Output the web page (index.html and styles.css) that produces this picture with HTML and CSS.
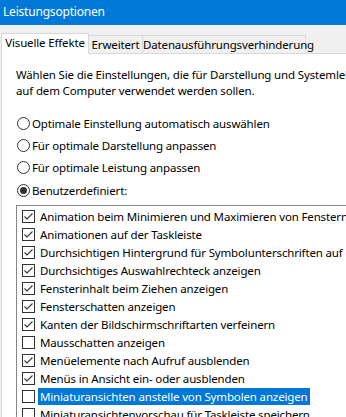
FILE: index.html
```html
<!DOCTYPE html>
<html lang="de">
<head>
<meta charset="utf-8">
<title>Leistungsoptionen</title>
<link rel="stylesheet" href="styles.css">
</head>
<body>
<div class="window">
  <div class="titlebar">Leistungsoptionen</div>
  <div class="tabs">
    <div class="tab active">Visuelle Effekte</div>
    <div class="tab t2">Erweitert</div>
    <div class="tab t3">Datenausführungsverhinderung</div>
  </div>
  <div class="panel">
    <p class="desc">Wählen Sie die Einstellungen, die für Darstellung und Systemleistung<br>auf dem Computer verwendet werden sollen.</p>
    <div class="radios">
      <div class="radio"><span class="dot"></span><span>Optimale Einstellung automatisch auswählen</span></div>
      <div class="radio"><span class="dot"></span><span>Für optimale Darstellung anpassen</span></div>
      <div class="radio"><span class="dot"></span><span>Für optimale Leistung anpassen</span></div>
      <div class="radio"><span class="dot on"></span><span>Benutzerdefiniert:</span></div>
    </div>
    <div class="list">
      <div class="item"><span class="cb on"><svg viewBox="0 0 11 11" width="11" height="11"><path d="M1.5 5.5 L4 8 L9.5 2.5" fill="none" stroke="#333" stroke-width="1.1"/></svg></span><span class="label">Animation beim Minimieren und Maximieren von Fenstern</span></div>
      <div class="item"><span class="cb on"><svg viewBox="0 0 11 11" width="11" height="11"><path d="M1.5 5.5 L4 8 L9.5 2.5" fill="none" stroke="#333" stroke-width="1.1"/></svg></span><span class="label">Animationen auf der Taskleiste</span></div>
      <div class="item"><span class="cb on"><svg viewBox="0 0 11 11" width="11" height="11"><path d="M1.5 5.5 L4 8 L9.5 2.5" fill="none" stroke="#333" stroke-width="1.1"/></svg></span><span class="label">Durchsichtigen Hintergrund für Symbolunterschriften auf dem Desktop</span></div>
      <div class="item"><span class="cb on"><svg viewBox="0 0 11 11" width="11" height="11"><path d="M1.5 5.5 L4 8 L9.5 2.5" fill="none" stroke="#333" stroke-width="1.1"/></svg></span><span class="label">Durchsichtiges Auswahlrechteck anzeigen</span></div>
      <div class="item"><span class="cb on"><svg viewBox="0 0 11 11" width="11" height="11"><path d="M1.5 5.5 L4 8 L9.5 2.5" fill="none" stroke="#333" stroke-width="1.1"/></svg></span><span class="label">Fensterinhalt beim Ziehen anzeigen</span></div>
      <div class="item"><span class="cb on"><svg viewBox="0 0 11 11" width="11" height="11"><path d="M1.5 5.5 L4 8 L9.5 2.5" fill="none" stroke="#333" stroke-width="1.1"/></svg></span><span class="label">Fensterschatten anzeigen</span></div>
      <div class="item"><span class="cb on"><svg viewBox="0 0 11 11" width="11" height="11"><path d="M1.5 5.5 L4 8 L9.5 2.5" fill="none" stroke="#333" stroke-width="1.1"/></svg></span><span class="label">Kanten der Bildschirmschriftarten verfeinern</span></div>
      <div class="item"><span class="cb"></span><span class="label">Mausschatten anzeigen</span></div>
      <div class="item"><span class="cb on"><svg viewBox="0 0 11 11" width="11" height="11"><path d="M1.5 5.5 L4 8 L9.5 2.5" fill="none" stroke="#333" stroke-width="1.1"/></svg></span><span class="label">Menüelemente nach Aufruf ausblenden</span></div>
      <div class="item"><span class="cb on"><svg viewBox="0 0 11 11" width="11" height="11"><path d="M1.5 5.5 L4 8 L9.5 2.5" fill="none" stroke="#333" stroke-width="1.1"/></svg></span><span class="label">Menüs in Ansicht ein- oder ausblenden</span></div>
      <div class="item"><span class="cb"></span><span class="label sel">Miniaturansichten anstelle von Symbolen anzeigen</span></div>
      <div class="item"><span class="cb"></span><span class="label">Miniaturansichtenvorschau für Taskleiste speichern</span></div>
      <div class="item"><span class="cb on"><svg viewBox="0 0 11 11" width="11" height="11"><path d="M1.5 5.5 L4 8 L9.5 2.5" fill="none" stroke="#333" stroke-width="1.1"/></svg></span><span class="label">Schriftglättung für Bildschirmschriftarten</span></div>
    </div>
  </div>
</div>
</body>
</html>
```

FILE: styles.css
```css
html, body {
  margin: 0;
  padding: 0;
  width: 346px;
  height: 417px;
  overflow: hidden;
}
body {
  background: #f0f0f0;
  font-family: "Noto Sans", "Open Sans", sans-serif;
  font-size: 11.5px;
  letter-spacing: -0.15px;
  color: #000;
}
.window {
  width: 520px;
}
.titlebar {
  height: 25px;
  line-height: 24px;
  background: #0078d7;
  color: #fff;
  padding-left: 3px;
  font-size: 12px;
  letter-spacing: -0.2px;
}
.tabs {
  display: flex;
  align-items: flex-end;
  margin-top: 8px;
  padding-left: 1px;
  height: 20px;
}
.tab {
  box-sizing: border-box;
  height: 18px;
  line-height: 17px;
  border: 1px solid #d9d9d9;
  border-bottom: none;
  text-align: center;
  background: #f0f0f0;
  white-space: nowrap;
}
.tab.active {
  height: 21px;
  line-height: 18px;
  width: 88px;
  background: #fff;
  margin-bottom: -1px;
  position: relative;
  z-index: 1;
}
.tab.t2 {
  width: 54px;
  border-left: none;
}
.tab.t3 {
  width: 163px;
  border-left: none;
}
.panel {
  margin-left: 1px;
  background: #fff;
  border: 1px solid #d9d9d9;
  padding: 13px 0 0 14px;
  height: 400px;
}
.desc {
  margin: 0;
  line-height: 16px;
  white-space: nowrap;
}
.radios {
  margin-top: 13px;
  display: flex;
  flex-direction: column;
}
.radio {
  height: 22.3px;
  display: flex;
  align-items: center;
  white-space: nowrap;
}
.dot {
  box-sizing: border-box;
  width: 13px;
  height: 13px;
  border: 1px solid #333;
  border-radius: 50%;
  margin-left: 1px;
  margin-right: 2px;
  display: flex;
  align-items: center;
  justify-content: center;
  flex: none;
}
.dot.on::after {
  content: "";
  width: 7px;
  height: 7px;
  border-radius: 50%;
  background: #333;
}
.list {
  margin-top: 4px;
  border: 1px solid #828790;
  padding: 1px 0 0 4px;
  background: #fff;
  height: 300px;
}
.item {
  height: 18px;
  display: flex;
  align-items: center;
  white-space: nowrap;
}
.cb {
  box-sizing: border-box;
  width: 13px;
  height: 13px;
  border: 1px solid #333;
  background: #fff;
  flex: none;
  display: flex;
  align-items: center;
  justify-content: center;
  margin-left: 1px;
}
.cb svg {
  display: block;
}
.label {
  margin-left: 3px;
  padding: 0 2px;
  line-height: 17px;
}
.label.sel {
  background: #0078d7;
  color: #fff;
}
```
